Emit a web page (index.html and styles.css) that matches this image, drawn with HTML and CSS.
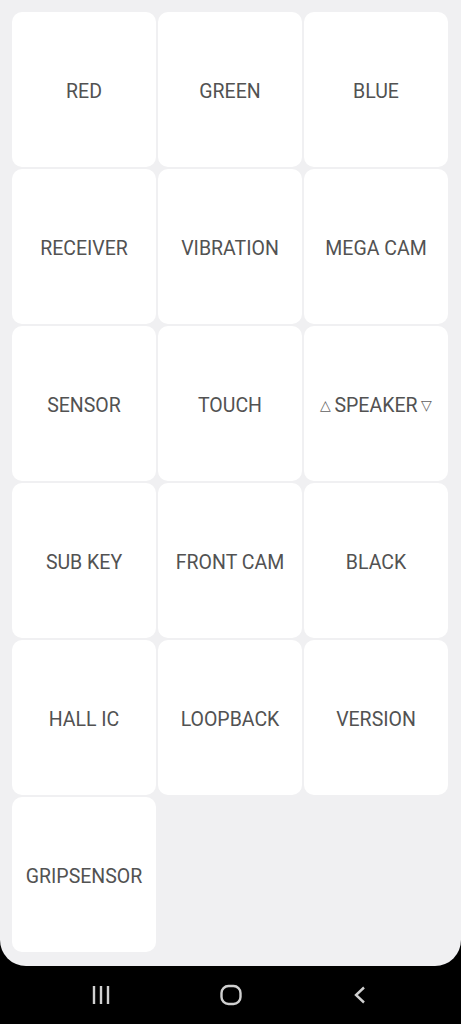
FILE: index.html
```html
<!DOCTYPE html>
<html lang="en">
<head>
    <meta charset="UTF-8">
    <meta name="viewport" content="width=device-width, initial-scale=1.0">
    <title>HwModuleTest</title>
    <link rel="stylesheet" href="styles.css">
</head>
<body>
    <!-- 테스트 항목 그리드 -->
    <div class="screen">
        <div class="grid">
            <div class="tile">RED</div>
            <div class="tile">GREEN</div>
            <div class="tile">BLUE</div>
            <div class="tile">RECEIVER</div>
            <div class="tile">VIBRATION</div>
            <div class="tile">MEGA CAM</div>
            <div class="tile">SENSOR</div>
            <div class="tile">TOUCH</div>
            <div class="tile"><span class="tri">△</span>SPEAKER<span class="tri">▽</span></div>
            <div class="tile">SUB KEY</div>
            <div class="tile">FRONT CAM</div>
            <div class="tile">BLACK</div>
            <div class="tile">HALL IC</div>
            <div class="tile">LOOPBACK</div>
            <div class="tile">VERSION</div>
            <div class="tile">GRIPSENSOR</div>
        </div>
    </div>
    <!-- 하단 네비게이션 바 -->
    <div class="navbar">
        <div class="nav_btn">
            <svg width="20" height="20" viewBox="0 0 20 20">
                <path d="M3 1v18M10 1v18M17 1v18" stroke="#d0d0d0" stroke-width="2.4" fill="none"/>
            </svg>
        </div>
        <div class="nav_btn">
            <svg width="22" height="22" viewBox="0 0 22 22">
                <rect x="1.5" y="2" width="19" height="18" rx="7" stroke="#d0d0d0" stroke-width="2.4" fill="none"/>
            </svg>
        </div>
        <div class="nav_btn">
            <svg width="14" height="18" viewBox="0 0 14 18">
                <path d="M11 1.5L3 9l8 7.5" stroke="#d0d0d0" stroke-width="2.4" fill="none"/>
            </svg>
        </div>
    </div>
</body>
</html>
```

FILE: styles.css
```css
html, body{
    margin: 0; padding: 0;
    background-color: #000;
}
.screen{
    background-color: #f0f0f2;
    height: 966px;
    border-radius: 0 0 26px 26px;
    padding: 12px 12px 0 12px;
    box-sizing: border-box;
}
.grid{
    display: grid;
    grid-template-columns: repeat(3, 144px);
    grid-auto-rows: 155px;
    gap: 2px;
}
.tile{
    background-color: #fff;
    border-radius: 10px;
    display: flex; align-items: center; justify-content: center;
    padding-top: 3px; box-sizing: border-box;
    font-family: Roboto, "Liberation Sans", sans-serif;
    font-size: 19.5px; color: #525252;
}
.tri{ /* 스피커 삼각형 */
    font-size: 14px; color: #606060;
    margin: 0 3px;
}
.navbar{
    height: 58px;
    display: flex; align-items: center;
    padding: 0 36px;
}
.nav_btn{
    flex: 1;
    display: flex; justify-content: center; align-items: center;
}
```
